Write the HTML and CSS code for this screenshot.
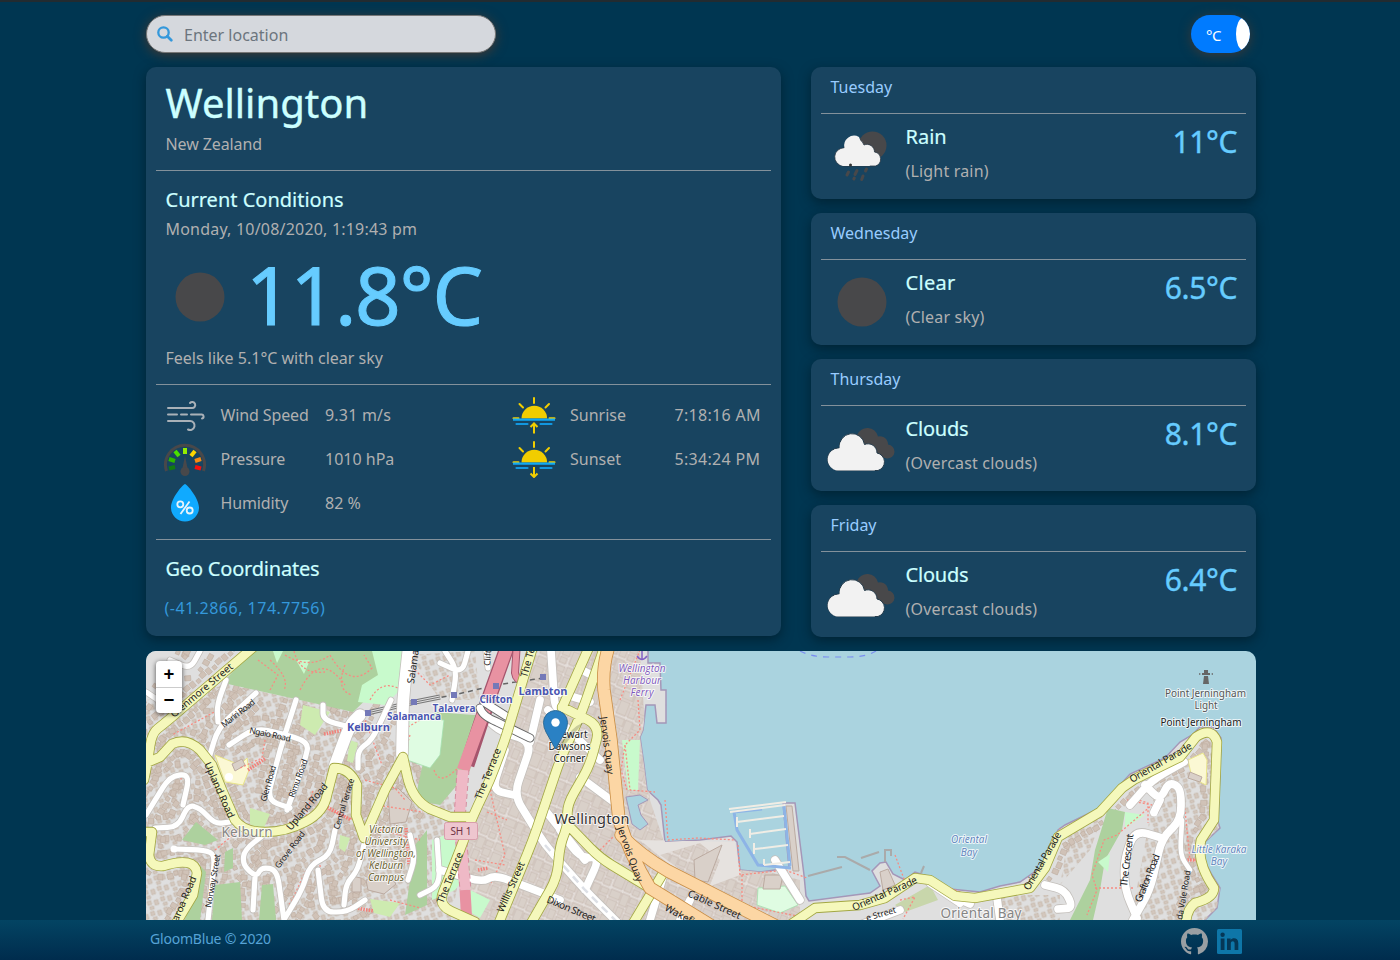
FILE: index.html
```html
<!DOCTYPE html>
<html lang="en">
<head>
<meta charset="utf-8">
<title>GloomBlue</title>
<link rel="stylesheet" href="styles.css">
</head>
<body>
<svg class="defs" width="0" height="0">
  <symbol id="moon" viewBox="0 0 50 50"><circle cx="25" cy="25" r="24.5" fill="#48484a"/></symbol>
  <symbol id="clouds" viewBox="0 0 70 44">
    <path fill="#48484a" d="M30 8a11 11 0 0 1 21 1.500a8 8 0 0 1 10 8a7 7 0 1 1-1 14L36 25z"/>
    <path fill="#f2f2f2" stroke="#243b4b" stroke-width="1" d="M11 43.500A11 11 0 0 1 12.500 21A12.500 12.500 0 0 1 37.500 17.500A9 9 0 0 1 50 26A9 9 0 0 1 51 43.500z"/>
    <path fill="#f2f2f2" d="M11 43.500A11 11 0 0 1 12.500 21.500A12.500 12.500 0 0 1 30 9L48 43.500z"/>
  </symbol>
  <symbol id="rain" viewBox="0 0 54 52">
    <circle cx="38.500" cy="14.500" r="14" fill="#48484a"/>
    <path fill="#f2f2f2" stroke="#2b3a46" stroke-width=".8" d="M9 35A9 9 0 0 1 10.500 17A10 10 0 0 1 30 14A7.500 7.500 0 0 1 40.500 21A7.200 7.200 0 0 1 41.500 35z"/>
    <path fill="#f2f2f2" d="M9 35A9 9 0 0 1 10.500 17.300A10 10 0 0 1 25 6L36 35z"/>
    <path d="M14.500 41l-1.500 3M23 39.500l-2 4M32.500 38l-1 2M20.300 47l-.5 1M29 45l-1.300 3.500" stroke="#48484a" stroke-width="3" stroke-linecap="round"/>
    <circle cx="16.500" cy="34" r="1.500" fill="#333"/>
  </symbol>
  <symbol id="sunline" viewBox="0 0 44 38">
    <path d="M9.500 22.500a12.800 12.800 0 0 1 25.600 0z" fill="#f1cd00"/>
    <path d="M22 2v5M7.500 8l3.500 3.500M37 8l-3.500 3.500M1.500 22.200h5M37.500 22.200h5" stroke="#f1cd00" stroke-width="2" stroke-linecap="round" fill="none"/>
    <path d="M1 23.600h42" stroke="#0fa9f5" stroke-width="2.200"/>
    <path d="M4.500 28h11M28.500 28h11" stroke="#1297e0" stroke-width="2.200" stroke-linecap="round"/>
  </symbol>
</svg>

<header class="topbar">
  <label class="search">
    <svg class="search-icon" viewBox="0 0 16 16"><circle cx="6.500" cy="6.500" r="5.200" fill="none" stroke="#3498db" stroke-width="2.300"/><path d="M10.300 10.300l4 4" stroke="#3498db" stroke-width="2.700" stroke-linecap="round"/></svg>
    <input class="search-input" type="text" placeholder="Enter location">
  </label>
  <div class="unit"><span class="unit-label">°C</span><span class="unit-knob"></span></div>
</header>

<main class="content">
  <section class="card now">
    <div class="block place">
      <h1 class="city">Wellington</h1>
      <p class="text country">New Zealand</p>
    </div>
    <div class="block current">
      <h2 class="heading wide">Current Conditions</h2>
      <p class="text date">Monday, 10/08/2020, 1:19:43 pm</p>
      <div class="reading"><svg class="reading-icon"><use href="#moon"/></svg><span class="reading-temp">11.8°C</span></div>
      <p class="text feels">Feels like 5.1°C with clear sky</p>
    </div>
    <div class="block metrics">
      <div class="metric">
        <svg class="metric-icon" viewBox="0 0 44 44" fill="none" stroke="#a9b1b8" stroke-width="2" stroke-linecap="round"><path d="M5 15h24a3 3 0 1 0-2-5M5 28h22a4.500 4.500 0 1 1-2 8.500"/><path d="M5 21.500h9M18 21.500h6M28 21.500h10a2 2 0 0 1 1 4"/></svg>
        <span class="metric-name">Wind Speed</span><span class="metric-value">9.31 m/s</span>
      </div>
      <div class="metric">
        <svg class="metric-icon" viewBox="0 0 44 44" fill="none"><path d="M3.500 34A19.500 19.500 0 1 1 40.500 34" stroke="#48484a" stroke-width="3"/><path d="M6 31.500l6-1.500" stroke="#117b11" stroke-width="4"/><path d="M6 22l6 2" stroke="#2db600" stroke-width="4"/><path d="M12 14l4 5" stroke="#4be000" stroke-width="4"/><path d="M22 11v6" stroke="#95ee00" stroke-width="4"/><path d="M32 14l-4 5" stroke="#ffd500" stroke-width="4"/><path d="M38 22l-6 2" stroke="#f78b12" stroke-width="4"/><path d="M38 31.500l-6-1.500" stroke="#f5100c" stroke-width="4"/><path d="M22 19l2.500 12h-5z" fill="#48484a"/><circle cx="22" cy="34.500" r="4.500" fill="#48484a"/></svg>
        <span class="metric-name">Pressure</span><span>1010 hPa</span>
      </div>
      <div class="metric">
        <svg class="metric-icon" viewBox="0 0 44 44"><path d="M22 3C24 3 36 17.500 36 26.500a14 14 0 0 1-28 0C8 17.500 20 3 22 3z" fill="#10aaff"/><g fill="none" stroke="#e8f4fb" stroke-width="1.800"><circle cx="17.300" cy="23.300" r="3"/><circle cx="26.700" cy="29.500" r="3"/><path d="M26.500 20.500l-9 12.500"/></g></svg>
        <span class="metric-name">Humidity</span><span>82 %</span>
      </div>
      <div class="metric sun">
        <svg class="sun-icon" viewBox="0 0 44 38"><use href="#sunline"/><path d="M22 37.500v-10M18.500 31l3.500-3.500 3.500 3.500" fill="none" stroke="#f1cd00" stroke-width="2"/></svg>
        <span>Sunrise</span><span class="metric-time">7:18:16 AM</span>
      </div>
      <div class="metric sun">
        <svg class="sun-icon" viewBox="0 0 44 38"><use href="#sunline"/><path d="M22 27v10M18.500 33.500l3.500 3.500 3.500-3.500" fill="none" stroke="#f1cd00" stroke-width="2"/></svg>
        <span>Sunset</span><span class="metric-time">5:34:24 PM</span>
      </div>
    </div>
    <div class="block geo">
      <h2 class="heading">Geo Coordinates</h2>
      <a class="coords">(-41.2866, 174.7756)</a>
    </div>
  </section>

  <section class="forecast">
    <article class="card day"><h3 class="day-name">Tuesday</h3><div class="day-body"><svg class="day-icon rain"><use href="#rain"/></svg><div class="day-text"><h4 class="heading wide">Rain</h4><p class="text">(Light rain)</p></div><span class="day-temp">11°C</span></div></article>
    <article class="card day"><h3 class="day-name">Wednesday</h3><div class="day-body"><svg class="day-icon clear"><use href="#moon"/></svg><div class="day-text"><h4 class="heading wider">Clear</h4><p class="text">(Clear sky)</p></div><span class="day-temp">6.5°C</span></div></article>
    <article class="card day"><h3 class="day-name">Thursday</h3><div class="day-body"><svg class="day-icon clouds"><use href="#clouds"/></svg><div class="day-text"><h4 class="heading">Clouds</h4><p class="text">(Overcast clouds)</p></div><span class="day-temp">8.1°C</span></div></article>
    <article class="card day"><h3 class="day-name">Friday</h3><div class="day-body"><svg class="day-icon clouds"><use href="#clouds"/></svg><div class="day-text"><h4 class="heading">Clouds</h4><p class="text">(Overcast clouds)</p></div><span class="day-temp">6.4°C</span></div></article>
  </section>
</main>

<section class="map">
<svg class="map-canvas" viewBox="146 651 1110 269">
  <defs>
    <pattern id="blocks" width="31" height="27" patternUnits="userSpaceOnUse" patternTransform="rotate(22)">
      <rect width="31" height="27" fill="#e4deda"/>
      <g fill="#d9d0c9" stroke="#c6b8ae" stroke-width=".8"><path d="M1 1h11v8H1zM13 1h8v12h-8zM22 2h8v6h-8zM1 11h10v14H1zM13 15h7v10h-7zM22 10h8v8h-8zM22 20h7v6h-7z"/></g>
    </pattern>
    <pattern id="roofs" width="14" height="11" patternUnits="userSpaceOnUse" patternTransform="rotate(-18)">
      <g fill="#d3c7be" stroke="#c2b3a8" stroke-width=".6"><path d="M1 1h4v4H1zM8 2h4v5H8zM2 7h4v3H2z"/></g>
    </pattern>
    <clipPath id="landclip"><use href="#landshape"/></clipPath>
  </defs>
  <rect x="146" y="651" width="1110" height="269" fill="#aad3df"/>
  <path d="M800 651q12 6 28 6h22q16 0 26-6" fill="none" stroke="#7b8df0" stroke-width="1.200" stroke-dasharray="6 6"/>
  <path id="landshape" fill="#dfdfdf" stroke="#a497b8" stroke-width="1.500" d="M140 640H648V663H660L661 690H666V723H657L655 705H646L643 730L640 737L644 765L647 790L658 800L661 805L665 842L700 840L731 836L737 842L740 870L760 872L789 868L783 803H795L804 875L806 896L809 901L870 893L880 886L872 871L880 863L886 862L893 874L905 880L915 872L930 877L950 889L980 892L1000 886L1020 882L1040 868L1050 848L1058 830L1065 825L1100 808L1120 785L1130 774L1165 758L1180 742L1192 735L1200 727L1213 727L1221 738L1218 822L1220 828L1205 842L1204 860L1212 875L1220 888L1217 908L1200 925H140z"/>
  <g clip-path="url(#landclip)">
    <path fill="url(#blocks)" d="M533 651H640L650 800L665 845L800 880V925H470L455 850L500 760z"/>
    <path fill="url(#roofs)" d="M146 700L228 685L350 710L405 750L470 820L450 925H146zM1155 790L1225 727V925H1130zM1070 828L1105 810L1090 850L1060 885zM410 655L475 651L480 700L440 700zM1000 895h60v30h-60z"/>
  </g>
  <g id="houses" fill="#d0c2b7" stroke="#bfaea1" stroke-width=".6"></g>
  <g clip-path="url(#landclip)">
    <path fill="#add19e" d="M228 677L252 651H400L376 690L353 712L300 700L228 684zM434 712L487 716L470 770L440 805L415 800zM195 860L206 872L200 920H185zM215 885L240 882L242 920H212zM262 885L273 884L276 920H259zM225 852L233 848L233 868L224 872zM1108 808L1125 812L1122 830L1105 860L1100 890L1093 920H1070L1090 880L1095 850zM415 845L427 830L427 905L405 915zM196 822L218 840L205 845L182 840z"/>
    <path fill="#c8facc" d="M372 651L412 651L400 690L385 705L358 702L362 685L378 675zM273 651h10l-6 12zM296 660h14l-6 14zM432 840L460 830L470 870L455 890L432 900zM622 740L640 740L638 790H628zM1125 812L1145 815L1125 828zM1098 862l12-8-2 18zM470 890L490 900L480 918L470 912z"/>
    <path fill="#dffce2" stroke="#a5dfae" stroke-width=".8" d="M409 718L444 720L440 755L430 768L407 760zM758 888L785 886L798 905L780 913L757 905z"/>
    <path fill="#cdebb0" d="M722 850L735 852L736 870L722 868zM303 705L330 712L315 735L300 725zM350 740l8 3-5 20-6-2zM250 808l20 6-8 18-12-8zM340 835l10 3-5 14-6-4zM370 899l30 4-10 14-16-4z"/>
    <path fill="#aad3df" stroke="#a497b8" d="M626 797L640 795L648 800L638 805L641 815L648 824L640 830L632 824z"/>
    <path fill="#fbf8d4" stroke="#e9e58a" d="M215 755L240 765L247 758L249 770L243 785L225 782zM1188 760L1203 753L1207 760L1206 785L1192 778z"/>
    <path fill="#d9d0c9" stroke="#bbaaa0" d="M232 764l10-5 3 6-10 6zM1190 772l12 5-2 5-12-4z"/>
    <path fill="#dbeec5" d="M700 845h20v18h-20z"/>
    <path fill="#e6e2df" d="M640 840L735 842L740 875L700 890z"/>
    <path fill="url(#blocks)" d="M660 855L700 843L720 860L708 890z"/>
    <path fill="#d9d0c9" stroke="#bbaaa0" d="M694 860L722 845L708 882L695 880zM765 875h18l-3 14h-17zM786 806h6l7 65h-6zM880 872l8-3 7 16-12 5zM388 790l10-2 14 14-6 20-16 2zM352 876l9 2v14h-9zM366 880l24-4 6 8-12 10-16-4z"/>
    <path fill="#c8d6ab" d="M895 905L930 885L938 900L905 912z"/>
  </g>
  <g class="foot">
    <path d="M258 660L278 675L270 690M270 660Q290 678 284 690M285 655Q310 670 330 655M330 655Q350 690 372 668L364 655M345 665Q335 690 352 695M300 690Q320 650 345 685M294 651Q300 675 325 672M370 700Q380 680 398 688L408 655M227 680L218 710L172 735M265 740L262 758 240 768M350 725L365 720 382 765M190 780L175 778M215 850L245 825M305 820l8-30M365 780l30 8 10 12M290 905l16-35M320 865l2 33M324 808l30 12M434 770Q440 790 465 760M410 735l-6 20M420 720l-14 8M490 790L505 855L490 885M487 812l20 8M415 670l15 15 20-10M620 700l20-50M638 700l2 30-15 15 5 45 25 2M625 745l-4 25 6 20M665 800l3 40 30-2 38 2M738 845l2 30 45-5 22 8M742 905l60 12M742 875v28M895 855l12 32M925 878l40 16M1040 868l20-40M1127 800l25 5-35 30-13 5-12 35 5 15-10 25M1095 888h40M1132 798l16 5v20M1184 800l6 60h10M900 900l15-3-12 22M380 830l40 10M390 900l30 8M383 806l40 6M475 860l30 5M600 850l14-14"/>
  </g>
  <path d="M248 770l18-12M324 734l20-4M325 806l26 14M406 828l3 36M350 907l24 4M487 787l14 6M478 870l10-2M1182 860h14M290 905l8-8" fill="none" stroke="#f3807a" stroke-width="3.500" stroke-dasharray="1.500 1.200"/>
  <g class="rail"><path d="M415 702L454 695L496 685L543 678"/></g>
  <path d="M367 713L415 702L440 697" fill="none" stroke="#777" stroke-width="5"/><path d="M367 713L415 702L440 697" fill="none" stroke="#ddd" stroke-width="3"/><path d="M367 713L415 702L440 697" fill="none" stroke="#777" stroke-width="1"/>
  <g id="white" class="roads">
    <path data-w="5.500" d="M218 722L217 705L226 680M256 693L218 728L209 758M229 745L255 728L280 733L309 742L305 760L287 810M296 700L280 750L267 800L290 808M391 700L372 740L358 750L358 768M323 705L323 720L350 727M146 815L170 776L190 774L183 805M155 828L178 827L188 805L200 808L215 824L230 822M175 849L205 850L215 855L208 920M284 920L277 870L262 867L256 877L243 865L244 850L270 830M253 910L255 877M335 830L330 855L310 865L302 890L285 918M318 870L323 912L347 912L365 900M344 905L346 884L358 870L365 840M445 651L457 670L452 700M440 663L462 673L468 651M420 895L440 885L437 840M146 692L158 700M170 660L190 669L200 651M488 668L486 651M410 835L415 858L408 880"/>
    <path data-w="8" d="M480 710L497 730L532 742L514 795L545 845L585 890L620 925M530 742L540 700M551 651L555 710L565 705M440 870L482 882L495 875L530 888L560 900M505 750L492 790L514 795M580 777L615 803M545 810L585 860M560 830L580 858L600 857L585 890M578 668L605 682M557 692L590 702M548 710L600 760M665 870L650 920M775 860L800 900M690 900L680 920M1130 805L1152 780L1184 762M1145 785L1160 800L1169 782L1181 788L1181 820L1162 838L1150 890L1133 920M1162 838L1135 830L1124 860L1125 890L1137 918M1154 812L1160 800M1045 885L1065 890L1073 908L1058 909M997 898L1000 920M950 895L970 904M930 883L960 903M900 910L860 925"/>
    <path data-w="5" d="M1182 820L1180 855L1190 870"/>
    <path data-w="12" d="M409 645L403 700L402 755M360 715L350 725L335 765"/>
  </g>
  <path d="M545 845L585 890L620 925" fill="none" stroke="#dde0e6" stroke-width="2.500" stroke-dasharray="8 6"/>
  <g fill="#fff"><circle cx="229" cy="777" r="4"/><circle cx="174" cy="849" r="3.500"/><circle cx="1154" cy="813" r="3.500"/></g>
  <path d="M509 642L489 698L467 765" fill="none" stroke="#a6556d" stroke-width="15"/><path d="M509 642L489 698L463 770" fill="none" stroke="#e892a2" stroke-width="12.500"/>
  <path d="M517 642L515 673Q516 680 524 682" fill="none" stroke="#a6556d" stroke-width="8"/><path d="M517 642L515 673Q516 680 524 682" fill="none" stroke="#e892a2" stroke-width="6"/>
  <path d="M463 770L459 820L465 890" fill="none" stroke="#efb9c6" stroke-width="11"/><path d="M457 770L454 820L460 890M469 770L465 820L471 890" fill="none" stroke="#d68b9e" stroke-dasharray="5 3"/><path d="M465 890l2 35" stroke="#e892a2" stroke-width="11"/>
  <g fill="none" stroke-linecap="round"><path d="M480 708Q482 716 497 722L530 738M484 702L506 716" stroke="#666" stroke-width="9"/><path d="M480 708Q482 716 497 722L530 738M484 702L506 716" stroke="#fff" stroke-width="7"/></g>
  <g id="yellow" class="roads">
    <path data-w="9" d="M256 645L165 723L152 733L148 760L144 780M144 764L160 757L172 744Q186 737 200 750L212 765L222 790L235 820Q244 832 265 832T305 822T327 795L334 768Q350 768 357 785L356 815L364 838L385 790L403 757L407 775Q412 800 430 809L450 817H472M140 832L152 832L149 855Q150 867 163 866Q195 856 197 873L193 895L175 925M534 643L505 740L490 780L472 818L460 850L438 905L475 922M590 645L562 708M562 707L600 726L590 765L567 805L568 825L560 845L557 878L530 925M605 645L582 712L560 760L533 840L498 925M568 825L600 858L648 887M662 875L632 925M790 925L815 908L860 905L885 898L915 878L930 880L955 896L975 898L1030 888L1045 868L1058 837L1100 812L1122 788L1135 779L1180 757L1196 737Q1212 726 1217 742L1214 820L1201 840Q1196 862 1214 888Q1214 898 1195 903Q1186 910 1186 925"/>
  </g>
  <g id="orange" class="roads">
    <path data-w="12" d="M610 643Q602 665 604 690L611 740L619 820Q630 855 650 888L715 928M621 835Q640 855 668 871L780 928"/>
  </g>
  <g stroke="#aaa" stroke-width="2" fill="none"><path d="M808 876l34-9M837 857l8 0 25 13M861 858l18-6M885 862v-12h6v6M924 866l-3 7"/></g>
  <path d="M734 812L737 830L758 865L791 868M762 809L734 812M784 806l6 60" fill="none" stroke="#8db4e6" stroke-width="3"/>
  <path d="M729 809L786 802M730 812L785 805M737 822L784 816M737 817v10M750 834L786 829M750 829v9M755 849L788 845M754 843v11M764 865L790 862M764 859v6" fill="none" stroke="#f0ede5" stroke-width="2"/>
  <g fill="#7479b8"><path d="M365 710h6v6h-6zM411 699h6v6h-6zM451 692h6v6h-6zM493 683h6v6h-6zM540 674h6v6h-6z"/></g>
  <rect x="444.500" y="822.500" width="33" height="17" rx="2" fill="#eec6cf" stroke="#d89eac"/><text x="461" y="835" class="shield">SH 1</text>
  <g fill="none" stroke="#8461c4" stroke-width="1.500"><path d="M642 651v9M637 656q5 7 10 0"/></g>
  <g fill="#666"><path d="M1203 684h6l-1-8h-4zM1202 673h8v2h-8zM1204 670h4v3h-4z"/><path d="M1199 673l2 1-2 1zM1213 673l-2 1 2 1z"/></g>
  <g class="labels">
    <g class="street">
      <text transform="translate(174 718) rotate(-40)" textLength="78">Glenmore Street</text>
      <text transform="translate(224 728) rotate(-38)" class="sm" textLength="40">Mariri Road</text>
      <text transform="translate(249 733) rotate(12)" class="sm" textLength="42">Ngaio Road</text>
      <text transform="translate(266 802) rotate(-74)" class="sm" textLength="37">Glen Road</text>
      <text transform="translate(294 798) rotate(-70)" class="sm" textLength="40">Rimu Road</text>
      <text transform="translate(204 764) rotate(66)" textLength="60">Upland Road</text>
      <text transform="translate(291 831) rotate(-50)" textLength="58">Upland Road</text>
      <text transform="translate(339 830) rotate(-73)" class="sm" textLength="53">Central Terrace</text>
      <text transform="translate(279 869) rotate(-53)" class="sm" textLength="44">Grove Road</text>
      <text transform="translate(211 908) rotate(-80)" class="sm" textLength="54">Norway Street</text>
      <text transform="translate(178 922) rotate(-67)">aroa Road</text>
      <text transform="translate(414 684) rotate(-82)">Salaman</text>
      <text transform="translate(490 666) rotate(-86)" class="sm">Clift</text>
      <text transform="translate(527 678) rotate(-75)">The Te</text>
      <text transform="translate(481 800) rotate(-68)" textLength="54">The Terrace</text>
      <text transform="translate(443 904) rotate(-68)" textLength="54">The Terrace</text>
      <text transform="translate(503 913) rotate(-66)" textLength="54">Willis Street</text>
      <text transform="translate(600 717) rotate(83)" textLength="58">Jervois Quay</text>
      <text transform="translate(617 828) rotate(70)" textLength="58">Jervois Quay</text>
      <text transform="translate(546 902) rotate(23)" textLength="52">Dixon Street</text>
      <text transform="translate(687 896) rotate(24)" textLength="57">Cable Street</text>
      <text transform="translate(664 910) rotate(28)">Wakefi</text>
      <text transform="translate(854 911) rotate(-24)" textLength="70">Oriental Parade</text>
      <text transform="translate(867 921) rotate(-16)" class="sm">e Street</text>
      <text transform="translate(1029 891) rotate(-60)" textLength="65">Oriental Parade</text>
      <text transform="translate(1132 783) rotate(-30)" textLength="70">Oriental Parade</text>
      <text transform="translate(1127 887) rotate(-83)" textLength="53">The Crescent</text>
      <text transform="translate(1141 903) rotate(-68)" textLength="51">Grafton Road</text>
      <text transform="translate(1182 920) rotate(-80)" class="sm" textLength="50">da Vale Road</text>
    </g>
    <g class="station"><text x="368.500" y="731" textLength="43">Kelburn</text><text x="414" y="720" textLength="54" class="s">Salamanca</text><text x="454" y="712" textLength="43" class="s">Talavera</text><text x="496" y="703" textLength="33" class="s">Clifton</text><text x="543" y="695" textLength="49">Lambton</text></g>
    <g class="ferry"><text x="642" y="672" textLength="47">Wellington</text><text x="642" y="684" textLength="38">Harbour</text><text x="642" y="696" textLength="23">Ferry</text></g>
    <g class="uni"><text x="386" y="833" textLength="34">Victoria</text><text x="386" y="845" textLength="43">University</text><text x="386" y="857" textLength="60">of Wellington,</text><text x="386" y="869" textLength="34">Kelburn</text><text x="386" y="881" textLength="36">Campus</text></g>
    <g class="water"><text x="969" y="843" textLength="36">Oriental</text><text x="969" y="856">Bay</text><text x="1219" y="853" textLength="55">Little Karaka</text><text x="1219" y="865">Bay</text></g>
    <g class="poi"><text x="570" y="738" textLength="35">Stewart</text><text x="569.500" y="750" textLength="42">Dawsons</text><text x="569.500" y="762" textLength="32">Corner</text><text x="1201" y="726" textLength="81">Point Jerningham</text><text x="1205.500" y="697" textLength="81" class="soft">Point Jerningham</text><text x="1206" y="709" textLength="23" class="soft">Light</text></g>
    <text class="suburb" x="247" y="837" textLength="51">Kelburn</text><text class="suburb" x="981" y="918" textLength="81">Oriental Bay</text>
    <text class="town" x="592" y="824" textLength="75">Wellington</text>
  </g>
  <path d="M556 748l16-18q5-5 12-8l-22 26z" fill="#000" opacity=".18"/>
  <path d="M555.500 749L546 732Q543.500 727 543.500 722.500A12 12 0 0 1 567.500 722.500Q567.500 727 565 732z" fill="#2a81c4" stroke="#2e6c97"/><circle cx="555.500" cy="722.500" r="4.200" fill="#fff"/>
</svg>
<div class="zoom"><span class="zoom-btn">+</span><span class="zoom-btn minus">−</span></div>
</section>

<footer class="footer">
  <span class="copyright">GloomBlue © 2020</span>
  <div class="social">
    <svg width="27" height="27" viewBox="0 0 16 16" fill="#999fa3"><path d="M8 0C3.580 0 0 3.580 0 8c0 3.540 2.290 6.530 5.470 7.590.4.070.55-.17.55-.38 0-.19-.01-.82-.01-1.490-2.010.37-2.530-.49-2.690-.94-.09-.23-.48-.94-.82-1.130-.28-.15-.68-.52-.01-.53.63-.01 1.080.58 1.230.82.72 1.210 1.870.87 2.330.66.07-.52.28-.87.51-1.070-1.780-.2-3.640-.89-3.640-3.950 0-.87.31-1.590.82-2.150-.08-.2-.36-1.020.08-2.120 0 0 .67-.21 2.200.82.64-.18 1.320-.27 2-.27s1.360.09 2 .27c1.530-1.040 2.200-.82 2.200-.82.44 1.100.16 1.920.08 2.120.51.56.82 1.270.82 2.150 0 3.070-1.870 3.750-3.650 3.950.29.25.54.73.54 1.480 0 1.070-.01 1.930-.01 2.200 0 .21.15.46.55.38A8.010 8.010 0 0 0 16 8c0-4.420-3.580-8-8-8z"/></svg>
    <svg width="25" height="25" viewBox="0 0 25 25"><rect width="25" height="25" rx="1.500" fill="#0e76a8"/><g fill="#053756"><circle cx="5.600" cy="5.800" r="2.200"/><path d="M3.700 9.500h3.800V21H3.700zM10 9.500h3.600v1.600c1.600-2.700 7.700-2.600 7.700 2.800V21h-3.700v-6.300c0-3.200-3.800-3-3.800 0V21H10z"/></g></svg>
  </div>
</footer>
<script src="map.js"></script>
</body>
</html>
```

FILE: styles.css
```css
* { box-sizing: border-box; }
body { margin: 0; height: 960px; overflow: hidden; background: #003651; border-top: 2px solid #222b30; font-family: "Noto Sans", "Open Sans", sans-serif; font-size: 16px; line-height: 24px; color: #b0b0b0; display: flex; flex-direction: column; }
h1, h2, h3, h4, p { margin: 0; font-weight: 400; }
.defs { position: absolute; }
.topbar { width: 1110px; height: 65px; margin-left: 146px; padding: 13px 6px 0 0; display: flex; justify-content: space-between; align-items: flex-start; flex: none; }
.search { width: 350px; height: 38px; border-radius: 19px; border: 1px solid #777; background: #d5d8dd; display: flex; align-items: center; padding-left: 10px; gap: 11px; box-shadow: 0 2px 12px rgba(80, 58, 45, .85); }
.search-icon { width: 16px; height: 16px; }
.search-input { border: 0; background: none; outline: 0; font: inherit; width: 280px; padding: 2px 0 0; }
.search-input::placeholder { color: #6c757d; }
.unit { width: 59px; height: 38px; border-radius: 19px; background: #007bff; overflow: hidden; box-shadow: 0 2px 12px rgba(80, 58, 45, .75); display: flex; align-items: center; justify-content: space-between; color: #fff; }
.unit-label { padding: 2px 0 0 15px; font-size: 15px; letter-spacing: -.4px; }
.unit-knob { width: 14px; height: 32px; border-radius: 50%; background: #fff; }
.content { width: 1110px; margin-left: 146px; display: flex; gap: 30px; height: 584px; flex: none; align-items: flex-start; }
.card { background: #184460; border-radius: 10px; box-shadow: 0 4px 12px rgba(0, 20, 30, .55); padding: 0 10px; }
.now { width: 635px; height: 569px; }
.block { border-bottom: 1px solid #83919b; padding-left: 9.500px; }
.place { height: 104px; padding-top: 11px; }
.city { font-size: 40px; line-height: 49px; color: #cff; -webkit-text-stroke: .4px #cff; }
.country { margin-top: 5px; letter-spacing: -.1px; }
.text { color: #b0b0b0; }
.current { height: 214px; padding-top: 17px; }
.heading { font-size: 20px; line-height: 24px; color: #cff; letter-spacing: -.2px; -webkit-text-stroke: .2px #cff; }
.wide { letter-spacing: 0; }
.wider { letter-spacing: .3px; }
.date { margin-top: 5px; letter-spacing: .2px; }
.reading { display: flex; align-items: center; height: 96px; margin-top: 5px; padding-left: 9.500px; gap: 21px; }
.reading-icon { width: 50px; height: 50px; position: relative; top: 2.500px; }
.reading-temp { font-size: 80px; line-height: 96px; color: #6cf; letter-spacing: -1.300px; -webkit-text-stroke: 1px #6cf; }
.feels { margin-top: 4px; }
.metrics { height: 155px; padding: 8px 0 0; display: grid; grid-template: repeat(3, 44px) / 347px 268px; grid-auto-flow: column; }
.metric { display: grid; grid-template-columns: 64.500px 104.500px 1fr; align-items: center; white-space: nowrap; }
.metric-name { letter-spacing: -.12px; }
.metric-value { letter-spacing: .2px; }
.metric-time { letter-spacing: .3px; }
.metric-icon { width: 44px; height: 44px; margin-left: 6.500px; }
.sun { grid-template-columns: 67px 104.500px 1fr; }
.sun-icon { width: 44px; height: 38px; margin-left: 9px; }
.geo { border: 0; padding-top: 17px; }
.coords { display: block; margin: 15px 0 0 -1px; color: #3498db; letter-spacing: .5px; }
.forecast { width: 445px; display: flex; flex-direction: column; gap: 14px; }
.day { height: 132px; }
.day-name { height: 47px; border-bottom: 1px solid #83919b; padding: 8px 0 0 9.500px; font-size: 16px; color: #9cf; }
.day-body { display: grid; grid-template-columns: 84.500px 1fr auto; padding-right: 9px; }
.day-icon { width: 70px; height: 44px; margin: 21px 0 0 6px; }
.day-icon.rain { width: 54px; height: 52px; margin: 17px 0 0 13px; }
.day-icon.clear { width: 50px; height: 50px; margin: 17px 0 0 15.500px; }
.day-text { padding-top: 11px; }
.day-text .text { margin-top: 10px; letter-spacing: .18px; }
.day-temp { font-size: 30px; line-height: 36px; padding-top: 10px; color: #6cf; letter-spacing: -.4px; -webkit-text-stroke: .4px #6cf; }
.map { width: 1110px; height: 269px; margin-left: 146px; border-radius: 10px 10px 0 0; overflow: hidden; position: relative; flex: none; }
.map-canvas { display: block; width: 1110px; height: 269px; }
.zoom { position: absolute; left: 10px; top: 10px; width: 26px; height: 52px; border-radius: 4px; background: #fff; box-shadow: 0 1px 5px rgba(0, 0, 0, .65); color: #000; }
.zoom-btn { display: block; height: 26px; line-height: 26px; text-align: center; font-size: 19px; font-weight: 700; }
.minus { border-top: 1px solid #ccc; line-height: 24px; }
.roads, .rail, .foot { fill: none; stroke-linejoin: round; }
.roads { stroke-linecap: round; }
.foot { stroke: #f68c82; stroke-width: 1.300; stroke-dasharray: 2 2; }
.rail { stroke: #666; stroke-width: 1.500; stroke-dasharray: 5 4; }
.labels text { text-anchor: middle; paint-order: stroke; stroke: rgba(255, 255, 255, .75); stroke-width: 2px; stroke-linejoin: round; }
.labels .street text { font-size: 10px; fill: #222; text-anchor: start; stroke: none; }
.labels .street .sm { font-size: 8.500px; }
.shield { font-size: 10px; fill: #6e3244; text-anchor: middle; }
.station { font-family: "Open Sans", sans-serif; font-size: 11px; font-weight: 700; fill: #4a55b0; }
.station .s { font-size: 10px; }
.ferry, .uni, .water { font-family: "Open Sans", sans-serif; font-size: 10px; font-style: italic; }
.ferry { fill: #7d58bd; }
.uni { fill: #655c2c; }
.water { fill: #5d83bd; }
.poi { font-size: 10px; fill: #222; }
.poi .soft { fill: #555; }
.suburb { font-size: 13.500px; fill: #858585; }
.town { font-size: 14.500px; fill: #333; }
.footer { height: 40px; flex: none; background: linear-gradient(#034463, #002c4d); padding: 0 158px 0 150px; display: flex; align-items: center; justify-content: space-between; }
.copyright { font-size: 14px; color: #56a3d6; letter-spacing: -.2px; padding-bottom: 2px; }
.social { display: flex; align-items: center; gap: 9px; padding-top: 2px; }
```

FILE: map.js
```js
const NS = "http://www.w3.org/2000/svg";
const styles = {
  white: ["#c4c0bc", "#ffffff"],
  yellow: ["#a3a743", "#f5f8bb"],
  orange: ["#c98e46", "#fcd6a4"]
};

// Rounds the corners of a straight-line path; parts with curves stay as they are.
function soften(d) {
  return d.split(/(?=M)/).map(part => {
    if (/[^ML\d.\s-]/.test(part)) return part;
    const n = part.match(/-?[\d.]+/g).map(Number);
    const pts = [];
    for (let i = 0; i < n.length; i += 2) pts.push([n[i], n[i + 1]]);
    let out = `M${pts[0]}`;
    for (let i = 1; i < pts.length - 1; i++) {
      const [px, py] = pts[i - 1], [x, y] = pts[i], [nx, ny] = pts[i + 1];
      const a = Math.min(0.45, 14 / Math.hypot(px - x, py - y));
      const b = Math.min(0.45, 14 / Math.hypot(nx - x, ny - y));
      out += `L${x + (px - x) * a} ${y + (py - y) * a}Q${x} ${y} ${x + (nx - x) * b} ${y + (ny - y) * b}`;
    }
    return out + `L${pts[pts.length - 1]}`;
  }).join("");
}

// Every road is drawn twice: a darker casing below, the surface above.
for (const [id, [casing, surface]] of Object.entries(styles)) {
  const group = document.getElementById(id);
  const paths = [...group.children];
  for (const p of paths) {
    const w = Number(p.dataset.w);
    p.setAttribute("d", soften(p.getAttribute("d")));
    const edge = p.cloneNode();
    edge.removeAttribute("data-w");
    edge.setAttribute("stroke", casing);
    edge.setAttribute("stroke-width", w + 1.3);
    group.insertBefore(edge, paths[0]);
    p.setAttribute("stroke", surface);
    p.setAttribute("stroke-width", w - 0.3);
  }
}

// Houses stand in rows on both sides of the residential streets.
const houses = document.getElementById("houses");
document.querySelectorAll("#white path[data-w='5.500'], #yellow path[data-w]").forEach(path => {
  path.getAttribute("d").split(/(?=M)/).forEach(part => {
    const line = document.createElementNS(NS, "path");
    line.setAttribute("d", part);
    const total = line.getTotalLength();
    for (let s = 4, i = 0; s < total; s += 7, i++) {
      const a = line.getPointAtLength(s), b = line.getPointAtLength(s + 1);
      if (a.x > 430 && a.x < 1040) continue;
      const angle = Math.atan2(b.y - a.y, b.x - a.x);
      for (const side of [-1, 1]) {
        if (a.x > 1040 && side === -1) continue;
        const off = side * (10 + (i * 7 % 3));
        const x = a.x - Math.sin(angle) * off, y = a.y + Math.cos(angle) * off;
        const r = document.createElementNS(NS, "rect");
        const w = 4 + i % 3, h = 4 + (i * 5) % 3;
        r.setAttribute("x", -w / 2);
        r.setAttribute("y", -h / 2);
        r.setAttribute("width", w);
        r.setAttribute("height", h);
        r.setAttribute("transform", `translate(${x} ${y}) rotate(${angle * 180 / Math.PI})`);
        houses.appendChild(r);
      }
    }
  });
});
```
